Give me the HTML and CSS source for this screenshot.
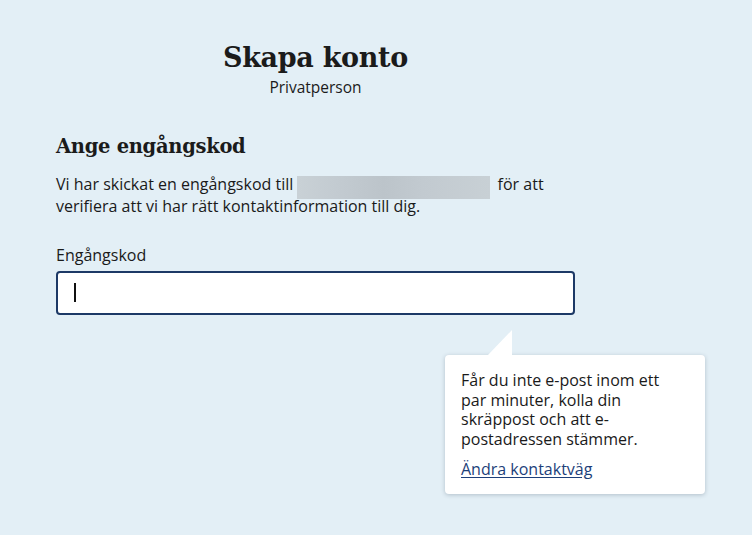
FILE: index.html
```html
<!DOCTYPE html>
<html lang="sv">
<head>
<meta charset="utf-8">
<title>Skapa konto</title>
<link rel="stylesheet" href="styles.css">
</head>
<body>
<main class="page">
  <header class="intro">
    <h1 class="title">Skapa konto</h1>
    <p class="subtitle">Privatperson</p>
  </header>
  <section class="step">
    <h2 class="step-title">Ange engångskod</h2>
    <p class="step-text">Vi har skickat en engångskod till <span class="masked"></span> för att verifiera att vi har rätt kontaktinformation till dig.</p>
    <label class="field-label" for="code">Engångskod</label>
    <div class="field">
      <span class="caret"></span>
      <input id="code" class="field-input" type="text" aria-label="Engångskod">
    </div>
  </section>
  <aside class="tip">
    <p class="tip-text">Får du inte e-post inom ett par minuter, kolla din skräppost och att e-postadressen stämmer.</p>
    <a class="tip-link" href="#">Ändra kontaktväg</a>
  </aside>
</main>
</body>
</html>
```
FILE: styles.css
```css
html, body {
  margin: 0;
  padding: 0;
}
body {
  background: #e3eff6;
  color: #1a1a1a;
  font-family: "Open Sans", "Noto Sans", sans-serif;
  width: 752px;
  height: 535px;
  overflow: hidden;
}
.page {
  position: relative;
  width: 519px;
  margin-left: 56px;
  padding-top: 38px;
  height: 497px;
}
.intro {
  text-align: center;
}
.title {
  margin: 0;
  font-family: "DejaVu Serif", serif;
  font-weight: bold;
  font-size: 27px;
  line-height: 40px;
  letter-spacing: -0.3px;
  color: #1b1b1b;
}
.subtitle {
  margin: 0;
  font-size: 15.5px;
  line-height: 19px;
  color: #1b1b1b;
}
.step {
  margin-top: 36px;
}
.step-title {
  margin: 0;
  font-family: "DejaVu Serif", serif;
  font-weight: bold;
  font-size: 19.5px;
  line-height: 28px;
  letter-spacing: -0.3px;
  color: #1b1b1b;
}
.step-text {
  margin: 13px 0 0;
  font-size: 16px;
  line-height: 21px;
  width: 500px;
}
.masked {
  display: inline-block;
  width: 193px;
  height: 23px;
  vertical-align: -6px;
  margin: -3px 3px -3px 0;
  background: linear-gradient(90deg, #c9d1d6 0%, #c3cbd1 20%, #bcc4ca 45%, #c2cad0 65%, #c8d0d5 100%);
  filter: blur(0.6px);
}
.field-label {
  display: block;
  margin-top: 28px;
  font-size: 16px;
  line-height: 21px;
}
.field {
  position: relative;
  margin-top: 5px;
  height: 44px;
  box-sizing: border-box;
  border: 2px solid #1d3966;
  border-radius: 4px;
  background: #ffffff;
}
.field-input {
  width: 100%;
  height: 100%;
  box-sizing: border-box;
  border: 0;
  background: transparent;
  outline: none;
  font: inherit;
  padding: 0 16px;
}
.caret {
  position: absolute;
  left: 16px;
  top: 10px;
  width: 2px;
  height: 19px;
  background: #111;
}
.tip {
  position: absolute;
  left: 389px;
  top: 355px;
  width: 260px;
  box-sizing: border-box;
  padding: 16px 24px 14px 16px;
  background: #ffffff;
  border-radius: 4px;
  box-shadow: 0 1px 4px rgba(30, 50, 70, 0.25);
}
.tip::before {
  content: "";
  position: absolute;
  left: 42px;
  top: -25px;
  width: 25px;
  height: 26px;
  background: #ffffff;
  clip-path: polygon(100% 0, 100% 100%, 0 100%);
}
.tip-text {
  margin: 0;
  font-size: 16px;
  line-height: 19.5px;
  color: #1a1a1a;
}
.tip-link {
  display: inline-block;
  margin-top: 10px;
  font-size: 16px;
  line-height: 20px;
  color: #1d3f7a;
  text-decoration: underline;
  text-underline-offset: 2px;
}
```
